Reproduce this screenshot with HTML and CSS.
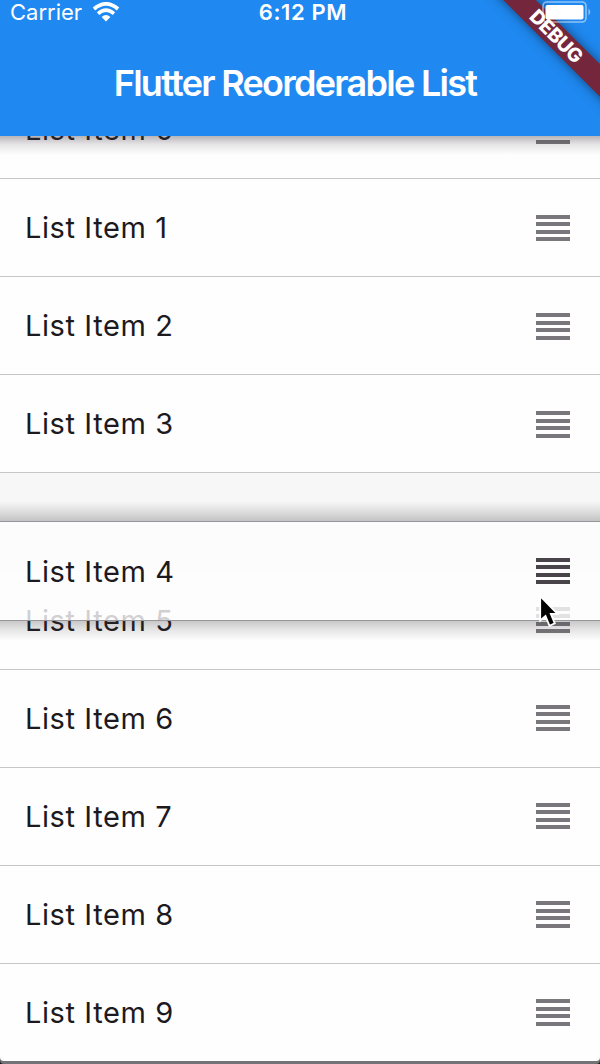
FILE: index.html
```html
<!DOCTYPE html>
<html lang="en">
<head>
    <meta charset="UTF-8">
    <title>Flutter Reorderable List</title>
    <link rel="stylesheet" href="styles.css">
</head>
<body>
    <div class="screen">
        <header class="app-bar">
            <div class="status-bar">
                <div class="status-left">
                    <span class="carrier">Carrier</span>
                    <svg class="wifi" width="28" height="20" viewBox="0 0 28 20">
                        <path d="M2 7 Q14 -3.2 26 7" fill="none" stroke="#fff" stroke-width="3.8"/>
                        <path d="M6 11.6 Q14 4.8 22 11.6" fill="none" stroke="#fff" stroke-width="3.6"/>
                        <path d="M9.6 15 Q14 11 18.4 15 L14 19.4 Z" fill="#fff"/>
                    </svg>
                </div>
                <span class="time">6:12 PM</span>
                <svg class="battery" width="50" height="23" viewBox="0 0 50 23">
                    <rect x="1" y="1" width="43" height="20" rx="4" fill="none" stroke="#fff" stroke-opacity=".5" stroke-width="1.6"/>
                    <rect x="3.5" y="4" width="38" height="14.5" rx="2" fill="#fff"/>
                    <path d="M46.5 7.5 Q50 11 46.5 14.5 Z" fill="#fff" fill-opacity=".5"/>
                </svg>
            </div>
            <h1 class="title">Flutter Reorderable List</h1>
            <div class="debug-banner">DEBUG</div>
        </header>

        <main class="list">
            <div class="row"><span class="label">List Item 0</span><i class="handle"></i></div>
            <div class="row"><span class="label">List Item 1</span><i class="handle"></i></div>
            <div class="row"><span class="label">List Item 2</span><i class="handle"></i></div>
            <div class="row"><span class="label">List Item 3</span><i class="handle"></i></div>
            <div class="row placeholder">
                <div class="row dragging"><span class="label">List Item 4</span><i class="handle"></i></div>
            </div>
            <div class="row"><span class="label">List Item 5</span><i class="handle"></i></div>
            <div class="row"><span class="label">List Item 6</span><i class="handle"></i></div>
            <div class="row"><span class="label">List Item 7</span><i class="handle"></i></div>
            <div class="row"><span class="label">List Item 8</span><i class="handle"></i></div>
            <div class="row last"><span class="label">List Item 9</span><i class="handle"></i></div>
        </main>

        <!-- mouse pointer -->
        <svg class="cursor" width="22" height="34" viewBox="0 0 22 34">
            <path d="M2.2 2 V26.5 L7.5 22 L11.5 31.8 L16.8 29.4 L12.8 19.8 H19.5 Z" fill="#000" stroke="#fff" stroke-width="1.8"/>
        </svg>
    </div>
</body>
</html>
```
FILE: styles.css
```css
* {
    box-sizing: border-box;
}

body {
    margin: 0;
    background: #1c1c1e;
    font-family: Inter, "Liberation Sans", sans-serif;
}

.screen {
    position: relative;
    width: 600px;
    height: 1064px;
    overflow: hidden;
}

/* app bar */
.app-bar {
    position: relative;
    z-index: 5;
    height: 136px;
    overflow: hidden;
    background: #1f89f1;
    color: #fff;
}

.screen::before {
    content: '';
    position: absolute;
    z-index: 4;
    top: 136px;
    left: 0;
    width: 100%;
    height: 19px;
    background: linear-gradient(rgba(60, 50, 60, 0.36), rgba(60, 50, 60, 0.12) 45%, rgba(60, 50, 60, 0));
}

.status-bar {
    position: relative;
    z-index: 2;
    display: grid;
    grid-template-columns: 1fr auto 1fr;
    align-items: center;
    height: 24px;
    padding: 0 8px 0 10px;
    font-size: 22px;
    line-height: 24px;
}

.status-left {
    display: flex;
    align-items: center;
    gap: 10px;
}

.time {
    padding-left: 4px;
    font-weight: 600;
    letter-spacing: 0.6px;
}

.battery {
    justify-self: end;
}

.title {
    margin: 37px 0 0;
    padding-right: 10px;
    text-align: center;
    font-size: 36px;
    line-height: 44px;
    font-weight: 600;
    letter-spacing: -1.72px;
}

.debug-banner {
    position: absolute;
    top: 25px;
    right: -55.5px;
    width: 200px;
    height: 23px;
    transform: rotate(45deg);
    background: #74263c;
    box-shadow: 0 0 12px rgba(0, 0, 0, 0.5);
    text-align: center;
    font-size: 19.5px;
    line-height: 23px;
    font-weight: 800;
    letter-spacing: -0.4px;
}

/* list */
.list {
    margin-top: -55px;
}

.row {
    display: flex;
    align-items: center;
    justify-content: space-between;
    height: 98.1px;
    padding: 1.2px 30px 0 25px;
    border-bottom: 1px solid #c6c5c8;
    background: #fefefe;
}

.label {
    color: #1c1a1e;
    font-size: 29px;
    line-height: 36px;
    letter-spacing: 0.6px;
}

.handle {
    width: 34px;
    height: 27px;
    background: repeating-linear-gradient(#79777b 0 4px, transparent 4px 7.5px);
}

.placeholder {
    position: relative;
    padding: 0;
    border: none;
    background: #f7f7f7;
}

.dragging {
    position: absolute;
    z-index: 2;
    top: 48px;
    left: 0;
    width: 100%;
    height: 100px;
    border-top: 1px solid #98969a;
    border-bottom: 1px solid #98969a;
    background: rgba(254, 253, 254, 0.8);
}

.dragging::before,
.dragging::after {
    content: '';
    position: absolute;
    left: 0;
    width: 100%;
    height: 20px;
}

.dragging::before {
    bottom: calc(100% + 1px);
    background: linear-gradient(to top, rgba(60, 55, 60, 0.27), rgba(60, 55, 60, 0.12) 50%, rgba(60, 55, 60, 0));
}

.dragging::after {
    top: calc(100% + 1px);
    background: linear-gradient(rgba(60, 55, 60, 0.27), rgba(60, 55, 60, 0.12) 45%, rgba(60, 55, 60, 0));
}

.dragging .handle {
    background: repeating-linear-gradient(#48444a 0 4px, transparent 4px 7.5px);
}

.last {
    position: relative;
    height: 97px;
    border-bottom: none;
    border-radius: 0 0 4px 4px;
    box-shadow: 0 3px 0 #747375;
}

.cursor {
    position: absolute;
    z-index: 6;
    top: 594px;
    left: 538px;
}
```
